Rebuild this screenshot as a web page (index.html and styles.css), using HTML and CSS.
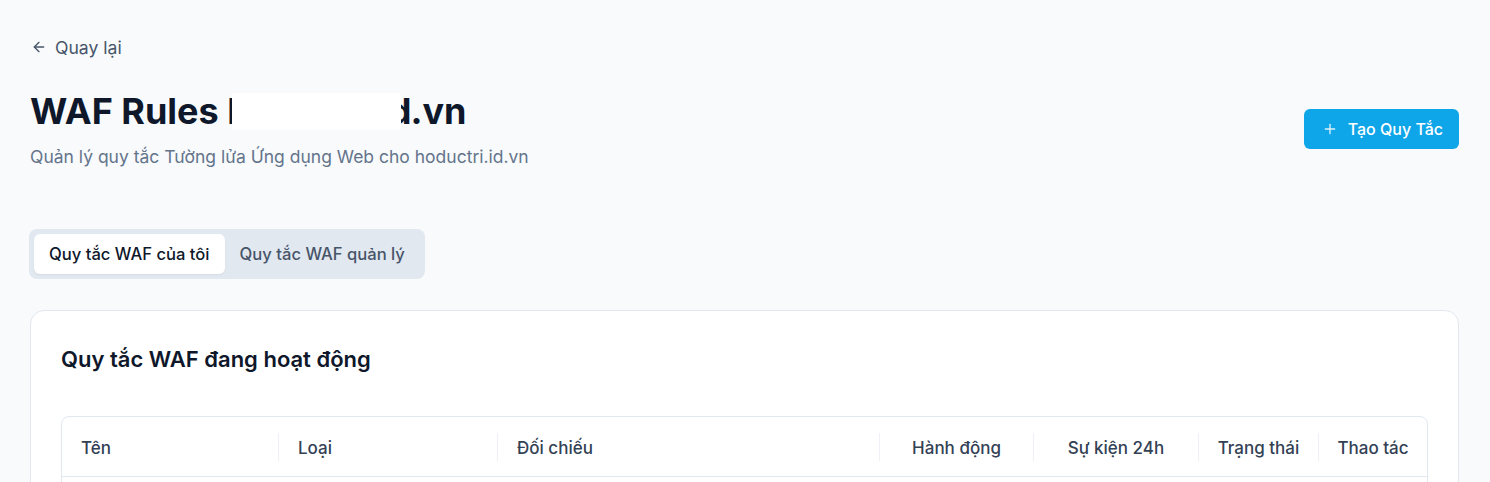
FILE: index.html
```html
<!DOCTYPE html>
<html lang="vi">
<head>
<meta charset="utf-8">
<link rel="stylesheet" href="styles.css">
</head>
<body>
<div class="page">
  <a class="back" href="#">
    <svg width="16" height="16" viewBox="0 0 24 24" fill="none" stroke="currentColor" stroke-width="2" stroke-linecap="round" stroke-linejoin="round"><path d="M19 12H5"/><path d="M12 19l-7-7 7-7"/></svg>
    <span>Quay lại</span>
  </a>
  <div class="header">
    <div class="titles">
      <h1 class="title">WAF Rules <span class="redact">hoductri.id</span>.vn</h1>
      <p class="subtitle">Quản lý quy tắc Tường lửa Ứng dụng Web cho hoductri.id.vn</p>
    </div>
    <button class="btn-primary">
      <svg width="16" height="16" viewBox="0 0 24 24" fill="none" stroke="currentColor" stroke-width="2" stroke-linecap="round"><path d="M12 5v14"/><path d="M5 12h14"/></svg>
      <span>Tạo Quy Tắc</span>
    </button>
  </div>
  <div class="tabs">
    <div class="tab active">Quy tắc WAF của tôi</div>
    <div class="tab">Quy tắc WAF quản lý</div>
  </div>
  <div class="card">
    <h2 class="card-title">Quy tắc WAF đang hoạt động</h2>
    <div class="table">
      <div class="thead">
        <div class="th left">Tên</div>
        <div class="th left sep">Loại</div>
        <div class="th left sep">Đối chiếu</div>
        <div class="th center sep">Hành động</div>
        <div class="th center sep">Sự kiện 24h</div>
        <div class="th center sep">Trạng thái</div>
        <div class="th center sep">Thao tác</div>
      </div>
      <div class="tbody"></div>
    </div>
  </div>
</div>
</body>
</html>
```
FILE: styles.css
```css
* { box-sizing: border-box; }
html, body { margin: 0; padding: 0; }
body {
  background: #f8fafc;
  font-family: Inter, "Noto Sans", sans-serif;
  color: #0f172a;
}
.page {
  padding: 36px 31px 0 30px;
}
.back {
  display: inline-flex;
  align-items: center;
  gap: 8px;
  color: #475569;
  text-decoration: none;
  font-size: 17.6px;
  height: 22px;
}
.back svg { margin-left: 1px; }
.header {
  display: flex;
  justify-content: space-between;
  align-items: center;
  margin-top: 32px;
}
.title {
  margin: 0;
  font-size: 36px;
  line-height: 40px;
  font-weight: 700;
  color: #0f172a;
}
.redact {
  position: relative;
  color: #0f172a;
  letter-spacing: -0.9px;
}
.redact::after {
  content: "";
  position: absolute;
  left: 5px; right: 9px; top: 4px; bottom: 3px;
  background: #ffffff;
  border-radius: 3px;
}
.subtitle {
  margin: 14px 0 0;
  font-size: 17.5px;
  line-height: 24px;
  color: #64748b;
}
.btn-primary {
  display: inline-flex;
  align-items: center;
  gap: 10px;
  height: 40px;
  padding: 0 16px 0 18px;
  background: #0ea5e9;
  color: #fff;
  border: none;
  border-radius: 6px;
  font-family: inherit;
  font-size: 16px;
  font-weight: 500;
  margin-bottom: 2px;
}
.btn-primary svg { opacity: 0.85; }
.tabs {
  display: inline-flex;
  margin-top: 60px;
  margin-left: -1px;
  padding: 5px;
  background: #e2e8f0;
  border-radius: 8px;
}
.tab {
  height: 40px;
  display: flex;
  align-items: center;
  padding: 0 15px;
  font-size: 16.6px;
  font-weight: 500;
  color: #475569;
  border-radius: 6px;
}
.tab.active {
  background: #fff;
  color: #0f172a;
  box-shadow: 0 1px 2px rgba(15, 23, 42, 0.06);
}
.card {
  margin-top: 31px;
  background: #fff;
  border: 1px solid #e2e8f0;
  border-radius: 14px;
  padding: 30px;
  min-height: 200px;
}
.card-title {
  margin: 0;
  font-size: 22px;
  line-height: 36px;
  font-weight: 600;
  color: #0f172a;
}
.table {
  margin-top: 39px;
  border: 1px solid #e2e8f0;
  border-radius: 8px;
}
.thead {
  display: grid;
  grid-template-columns: 216px 219px 382px 154px 165px 120px 1fr;
  padding: 16px 0 15px;
  border-bottom: 1px solid #e2e8f0;
}
.th {
  height: 28px;
  display: flex;
  align-items: center;
  padding-top: 2px;
  font-size: 17px;
  font-weight: 500;
  color: #334155;
}
.th.left { padding-left: 19px; }
.th.center { justify-content: center; }
.th.sep { border-left: 1px solid #eef1f5; }
.tbody { height: 60px; }
```
